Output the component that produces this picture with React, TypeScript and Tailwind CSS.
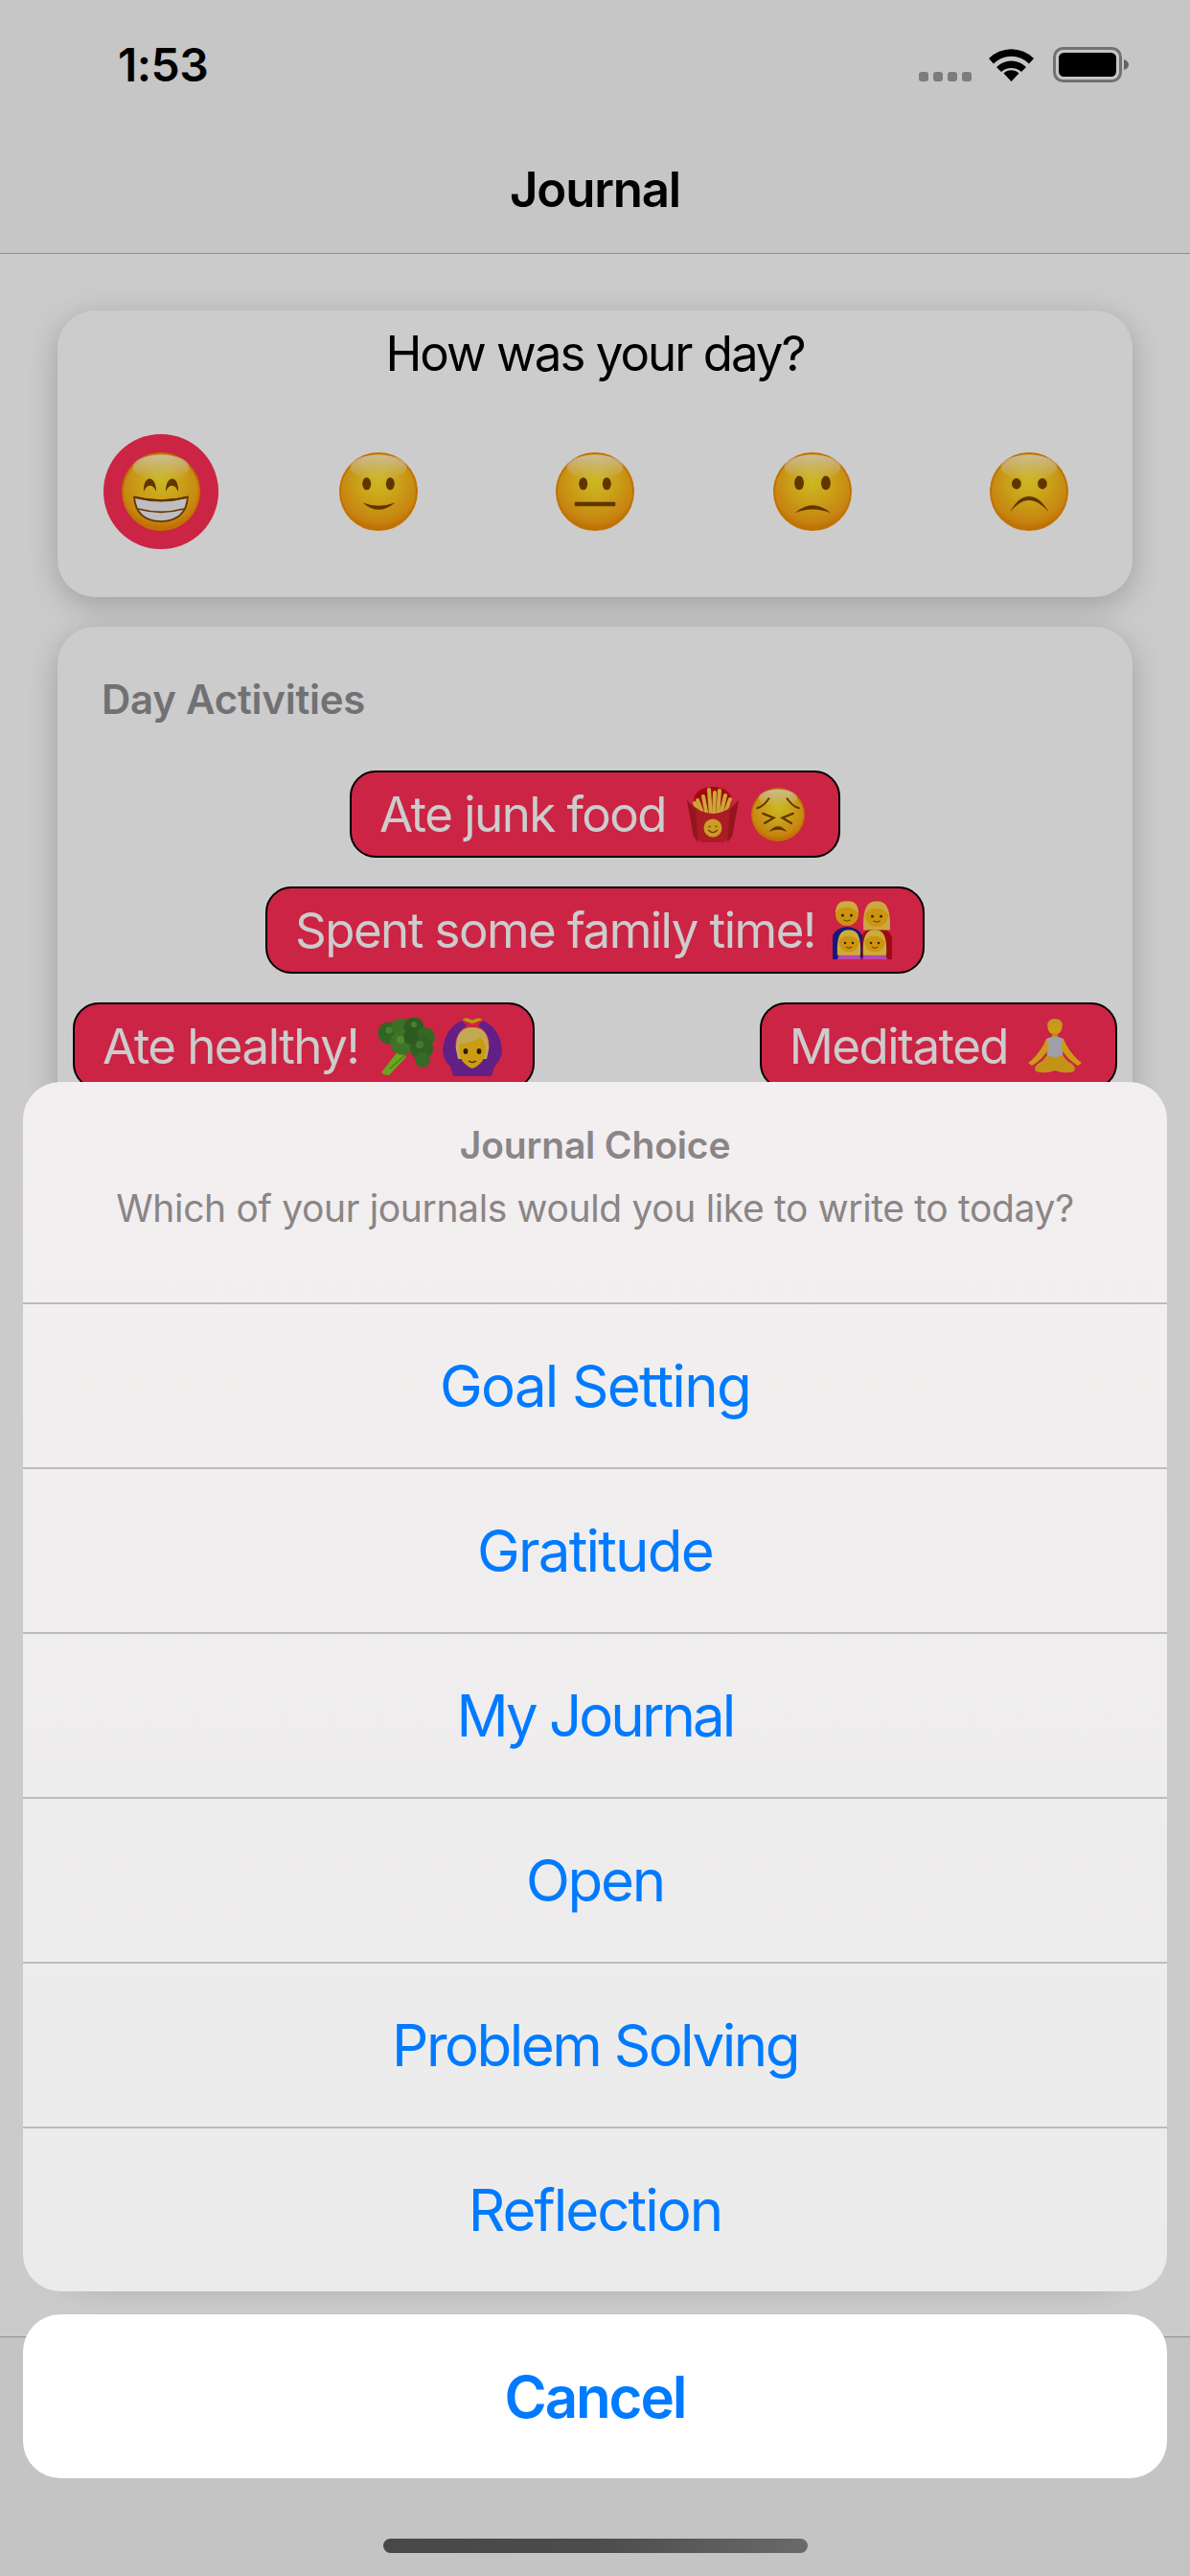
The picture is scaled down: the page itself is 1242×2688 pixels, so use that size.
import React from "react";

function FaceBase({ id }: { id: string }) {
  return (
    <>
      <defs>
        <radialGradient id={id} cx="50%" cy="36%" r="64%">
          <stop offset="0%" stopColor="#ffe82c" />
          <stop offset="45%" stopColor="#fdc81e" />
          <stop offset="85%" stopColor="#f9a516" />
          <stop offset="100%" stopColor="#ee8a00" />
        </radialGradient>
        <linearGradient id={id + "h"} x1="0" y1="0" x2="0" y2="1">
          <stop offset="0%" stopColor="#ffffff" stopOpacity="0.7" />
          <stop offset="100%" stopColor="#ffffff" stopOpacity="0" />
        </linearGradient>
      </defs>
      <circle cx="50" cy="50" r="50" fill="#f09000" />
      <circle cx="50" cy="50" r="47.5" fill={`url(#${id})`} />
      <ellipse cx="50" cy="19" rx="36" ry="16" fill={`url(#${id}h)`} />
    </>
  );
}

const BROWN = "#7a4300";

function Grin() {
  return (
    <svg viewBox="0 0 100 100" className="w-[82px] h-[82px]">
      <FaceBase id="f1" />
      <path d="M28 50 C27 28 44 28 44 50 C40 40 32 40 28 50Z" fill={BROWN} />
      <path d="M56 50 C56 28 73 28 72 50 C68 40 60 40 56 50Z" fill={BROWN} />
      <path d="M16 57 Q50 66 84 57 Q82 87 50 88 Q18 87 16 57Z" fill="#eeeef2" stroke={BROWN} strokeWidth="2.2" />
      <path d="M21 72 Q50 80 79 72" fill="none" stroke={BROWN} strokeWidth="2" />
      <path d="M16 57 Q50 66 84 57" fill="none" stroke={BROWN} strokeWidth="2.8" />
    </svg>
  );
}
function Smile() {
  return (
    <svg viewBox="0 0 100 100" className="w-[82px] h-[82px]">
      <FaceBase id="f2" />
      <ellipse cx="35" cy="40" rx="5.5" ry="8" fill={BROWN} />
      <ellipse cx="65" cy="40" rx="5.5" ry="8" fill={BROWN} />
      <path d="M30 64 Q50 72 71 64 Q50 82 30 64Z" fill={BROWN} />
    </svg>
  );
}
function Neutral() {
  return (
    <svg viewBox="0 0 100 100" className="w-[82px] h-[82px]">
      <FaceBase id="f3" />
      <ellipse cx="35" cy="40" rx="5.5" ry="8" fill={BROWN} />
      <ellipse cx="65" cy="40" rx="5.5" ry="8" fill={BROWN} />
      <rect x="24" y="63" width="52" height="5.5" rx="1.5" fill={BROWN} />
    </svg>
  );
}
function Slight() {
  return (
    <svg viewBox="0 0 100 100" className="w-[82px] h-[82px]">
      <FaceBase id="f4" />
      <ellipse cx="33" cy="39" rx="6" ry="9" fill={BROWN} />
      <ellipse cx="67" cy="39" rx="6" ry="9" fill={BROWN} />
      <path d="M28 77 Q50 58 73 77 Q50 68 28 77Z" fill={BROWN} />
    </svg>
  );
}
function Frown() {
  return (
    <svg viewBox="0 0 100 100" className="w-[82px] h-[82px]">
      <FaceBase id="f5" />
      <ellipse cx="34" cy="40" rx="6" ry="7" fill={BROWN} />
      <ellipse cx="67" cy="40" rx="6" ry="7" fill={BROWN} />
      <path d="M26 76 Q36 56 50 56 Q64 56 75 76 Q62 61 50 61 Q38 61 26 76Z" fill={BROWN} />
    </svg>
  );
}
function Fries() {
  return (
    <svg viewBox="0 0 54 58" className="w-[54px] h-[58px] ml-[22px]">
      <ellipse cx="27" cy="14" rx="20" ry="14" fill="#c81010" />
      <g stroke="#ffd045" strokeWidth="4" strokeLinecap="round">
        <path d="M11 14 L17 30" />
        <path d="M17 10 L21 31" />
        <path d="M23 3 L25 31" />
        <path d="M29 6 L28 31" />
        <path d="M34 4 L32 31" />
        <path d="M40 9 L35 30" />
        <path d="M45 13 L39 29" />
        <path d="M8 17 L13 28" />
      </g>
      <path d="M0 14 Q27 42 54 14 L47 52 L38 58 L16 58 L7 52Z" fill="#d8232e" />
      <path d="M0 14 L9 24 L12 58 L7 52Z" fill="#b81c26" />
      <path d="M54 14 L45 24 L42 58 L47 52Z" fill="#b81c26" />
      <circle cx="27" cy="43" r="9.5" fill="#ffc52e" />
      <path d="M22 42 q1.5 -2 3 0 M29 42 q1.5 -2 3 0" stroke="#8a5200" strokeWidth="1" fill="none" />
      <path d="M22 45 Q27 50 32 45" stroke="#8a5200" strokeWidth="1.2" fill="none" />
    </svg>
  );
}
function Persevere() {
  return (
    <svg viewBox="0 0 100 100" className="w-[56px] h-[56px] ml-[13px]">
      <FaceBase id="f6" />
      <g fill="none" stroke={BROWN} strokeLinecap="round">
        <path d="M11 38 Q24 34 33 20" strokeWidth="3.5" />
        <path d="M89 38 Q76 34 67 20" strokeWidth="3.5" />
        <path d="M22 48 L42 56 L25 66" strokeWidth="4" />
        <path d="M78 48 L58 56 L75 66" strokeWidth="4" />
      </g>
      <path d="M33 82 Q50 62 67 82 Q50 74 33 82Z" fill={BROWN} />
    </svg>
  );
}
function Head({ x, y, r, hair, long }: { x: number; y: number; r: number; hair: string; long?: boolean }) {
  return (
    <g>
      {long && <path d={`M${x - r * 1.15} ${y + r * 1.3} Q${x - r * 1.3} ${y - r * 1.3} ${x} ${y - r * 1.2} Q${x + r * 1.3} ${y - r * 1.3} ${x + r * 1.15} ${y + r * 1.3}Z`} fill={hair} />}
      <circle cx={x} cy={y} r={r} fill="#ffb914" />
      <path d={`M${x - r} ${y - r * 0.1} Q${x - r} ${y - r * 1.2} ${x} ${y - r * 1.15} Q${x + r} ${y - r * 1.2} ${x + r} ${y - r * 0.1} Q${x + r * 0.5} ${y - r * 0.65} ${x - r * 0.1} ${y - r * 0.6} Q${x - r * 0.7} ${y - r * 0.6} ${x - r} ${y - r * 0.1}Z`} fill={hair} />
      <circle cx={x - r * 0.38} cy={y + r * 0.1} r={r * 0.12} fill="#4a2a00" />
      <circle cx={x + r * 0.38} cy={y + r * 0.1} r={r * 0.12} fill="#4a2a00" />
      <path d={`M${x - r * 0.3} ${y + r * 0.5} Q${x} ${y + r * 0.7} ${x + r * 0.3} ${y + r * 0.5}`} stroke="#6a3a00" strokeWidth="0.9" fill="none" />
    </g>
  );
}
function Family() {
  return (
    <svg viewBox="0 0 62 61" className="w-[62px] h-[61px] ml-[18px]">
      <path d="M0 61 L0 36 Q4 28 15 27 Q27 28 31 36 L31 61Z" fill="#1c1c9c" />
      <path d="M31 61 L31 36 Q35 28 46 28 Q58 28 62 38 L62 61Z" fill="#c40f18" />
      <Head x={15} y={14} r={12} hair="#ffd84a" />
      <Head x={46} y={15} r={12} hair="#ffd050" long />
      <path d="M5 61 Q6 52 17 51 Q28 52 30 61Z" fill="#e85ad8" />
      <path d="M31 61 Q33 52 44 51 Q55 52 57 61Z" fill="#e85ad8" />
      <Head x={17} y={43} r={10.5} hair="#ffd84a" long />
      <Head x={44} y={43} r={10.5} hair="#ffd84a" long />
    </svg>
  );
}
function Broccoli() {
  return (
    <svg viewBox="0 0 60 60" className="w-[60px] h-[60px] ml-[20px]">
      <path d="M4 57 L22 34 L30 41 L12 60 Q7 60 4 57Z" fill="#86cf26" />
      <path d="M13 53 L30 38" stroke="#5ea515" strokeWidth="1.5" />
      <circle cx="12" cy="16" r="11.5" fill="#3f7f2c" />
      <circle cx="24" cy="10" r="9.5" fill="#4b8c30" />
      <circle cx="38" cy="10" r="10.5" fill="#37752a" />
      <circle cx="50" cy="20" r="10" fill="#42812c" />
      <circle cx="26" cy="26" r="12.5" fill="#4d9232" />
      <circle cx="46" cy="32" r="12" fill="#3c7a2a" />
      <circle cx="47" cy="44" r="8" fill="#448530" />
      <circle cx="35" cy="20" r="8" fill="#36722a" />
      <circle cx="24" cy="23" r="4" fill="#65ab42" />
      <circle cx="12" cy="13" r="3.5" fill="#5da13c" />
      <circle cx="44" cy="28" r="4" fill="#57983a" />
      <circle cx="38" cy="7" r="3" fill="#5da13c" />
    </svg>
  );
}
function WomanOk() {
  return (
    <svg viewBox="0 0 62 62" className="w-[62px] h-[62px] ml-[8px]">
      <path d="M31 7 L21 3 Q24 0 31 4 Q38 0 41 3Z" fill="#ffc21c" stroke="#e0a010" strokeWidth="1" />
      <path d="M0 35 Q2 12 20 4 L25 9 Q12 18 13 32 L17 44 L45 44 L49 32 Q50 18 37 9 L42 4 Q60 12 62 35 Q62 44 54 52 L51 62 L11 62 L8 52 Q0 44 0 35Z" fill="#7b28a8" />
      <path d="M14 34 Q13 11 31 11 Q49 11 48 34 L46 44 L16 44Z" fill="#f6d46a" />
      <path d="M17 34 Q17 48 31 54 Q45 48 45 34 Q45 26 39 21 Q30 28 18 28Z" fill="#ffc21c" />
      <ellipse cx="24" cy="36" rx="2.4" ry="3" fill="#3d2300" />
      <ellipse cx="38" cy="36" rx="2.4" ry="3" fill="#3d2300" />
      <path d="M27 46 Q31 49 35 46" stroke="#6a3a00" strokeWidth="1.5" fill="none" />
    </svg>
  );
}
function Meditate() {
  return (
    <svg viewBox="0 0 60 58" className="w-[60px] h-[58px] ml-[19px]">
      <circle cx="30" cy="9" r="7.5" fill="#ffc21c" />
      <path d="M22 8 Q22 0 30 0 Q38 0 38 8 Q30 3 22 8Z" fill="#f2bc30" />
      <rect x="27" y="15" width="6" height="5" fill="#f0b018" />
      <path d="M21 21 Q30 16 39 21 L38 42 L22 42Z" fill="#c7c9d1" />
      <path d="M21 21 Q17 32 6 43 L2 46 L6 49 Q18 42 24 30Z" fill="#ffc21c" />
      <path d="M39 21 Q43 32 54 43 L58 46 L54 49 Q42 42 36 30Z" fill="#ffc21c" />
      <path d="M22 38 Q30 42 38 38 L43 44 Q54 50 50 55 Q40 58 30 54 Q20 58 10 55 Q6 50 17 44Z" fill="#f4b81e" />
    </svg>
  );
}

function Pill({ label, children, pr }: { label: string; children: React.ReactNode; pr: string }) {
  return (
    <div className={`flex items-center h-[91px] rounded-[27px] border-2 border-black bg-[#ff2d55] pl-[29px] ${pr}`}>
      <span className="text-[51px] leading-[60px] text-white tracking-[-1.55px] whitespace-nowrap">{label}</span>
      {children}
    </div>
  );
}

const OPTIONS = [
  { label: "Goal Setting", cls: "tracking-[-1.7px]" },
  { label: "Gratitude", cls: "tracking-[-1.8px]" },
  { label: "My Journal", cls: "tracking-[-2.9px]" },
  { label: "Open", cls: "tracking-[-2.2px]" },
  { label: "Problem Solving", cls: "tracking-[-2.5px]" },
  { label: "Reflection", cls: "tracking-[-2px]" },
];

export default function App() {
  return (
    <div className="relative w-[1242px] h-[2688px] overflow-hidden flex flex-col bg-[#fefefe] font-['Inter','Liberation_Sans',sans-serif]">
      <header className="h-[265px] shrink-0 bg-[#f8f8f8] border-b border-[#b2b2b2]">
        <div className="h-[132px] flex justify-between pl-[123px] pr-[64px] pt-[49px]">
          <span className="text-[48px] leading-[37px] font-semibold text-black tracking-[-0.5px]">1:53</span>
          <div className="flex items-start">
            <div className="flex gap-[5px] mt-[26px] mr-[18px]">
              <div className="w-[10px] h-[10px] rounded-[3px] bg-[#9b9b9b]" />
              <div className="w-[10px] h-[10px] rounded-[3px] bg-[#9b9b9b]" />
              <div className="w-[10px] h-[10px] rounded-[3px] bg-[#9b9b9b]" />
              <div className="w-[10px] h-[10px] rounded-[3px] bg-[#9b9b9b]" />
            </div>
            <svg viewBox="0 0 47 36" className="w-[47px] h-[36px] mr-[20px]" fill="#000">
              <path d="M23.5 36 L15.5 27.5 A11.5 11.5 0 0 1 31.5 27.5 Z" />
              <path d="M8 21 A22 22 0 0 1 39 21 L34 26 A15.5 15.5 0 0 0 13 26 Z" />
              <path d="M0 12 A33 33 0 0 1 47 12 L42 17.5 A26 26 0 0 0 5 17.5 Z" />
            </svg>
            <svg viewBox="0 0 79 37" className="w-[79px] h-[37px]">
              <rect x="1.5" y="1.5" width="69" height="34" rx="9" fill="none" stroke="#8e8e8e" strokeWidth="3" />
              <rect x="6" y="6" width="60" height="25" rx="5.5" fill="#000" />
              <path d="M74 13 Q79 15 79 18.5 Q79 22 74 24Z" fill="#7e7e7e" />
            </svg>
          </div>
        </div>
        <div className="h-[132px] flex items-center justify-center">
          <span className="text-[51px] font-semibold text-black tracking-[-1.2px]">Journal</span>
        </div>
      </header>

      <main className="flex-1 flex flex-col gap-[31px] px-[60px] pt-[59px] pb-[63px]">
        <section className="h-[299px] shrink-0 rounded-[39px] bg-white shadow-[0_8px_32px_rgba(0,0,0,0.22)] pt-[14px]">
          <p className="text-center text-[51px] leading-[61px] text-black tracking-[-2px]">How was your day?</p>
          <div className="mt-[54px] px-[48px] flex justify-between">
            <div className="w-[120px] h-[120px] rounded-full bg-[#ff2d55] flex items-center justify-center"><Grin /></div>
            <div className="w-[120px] h-[120px] flex items-center justify-center"><Smile /></div>
            <div className="w-[120px] h-[120px] flex items-center justify-center"><Neutral /></div>
            <div className="w-[120px] h-[120px] flex items-center justify-center"><Slight /></div>
            <div className="w-[120px] h-[120px] flex items-center justify-center"><Frown /></div>
          </div>
        </section>

        <section className="flex-1 rounded-[39px] bg-white shadow-[0_8px_32px_rgba(0,0,0,0.22)] pt-[48px] px-[16px]">
          <h2 className="pl-[30px] text-[42px] leading-[56px] font-semibold text-[#8e8e93] tracking-[-0.25px]">Day Activities</h2>
          <div className="mt-[46px] flex flex-col gap-[30px]">
            <div className="flex justify-center">
              <Pill label="Ate junk food" pr="pr-[35px]"><Fries /><Persevere /></Pill>
            </div>
            <div className="flex justify-center">
              <Pill label="Spent some family time!" pr="pr-[32px]"><Family /></Pill>
            </div>
            <div className="flex justify-between">
              <Pill label="Ate healthy!" pr="pr-[32px]"><Broccoli /><WomanOk /></Pill>
              <Pill label="Meditated" pr="pr-[33px]"><Meditate /></Pill>
            </div>
          </div>
        </section>
      </main>

      <footer className="h-[250px] shrink-0 bg-[#f5f5f5] border-t border-[#b2b2b2]" />

      <div className="absolute inset-0 bg-black/20 flex flex-col justify-end items-stretch px-[24px] pb-[24px]">
        <div className="rounded-[39px] overflow-hidden bg-gradient-to-b from-[#f3eff0] to-[#ebebeb]">
          <div className="h-[230px] pt-[48px] text-center">
            <p className="text-[39px] leading-[36px] font-semibold text-[#8a8586] tracking-[-0.15px]">Journal Choice</p>
            <p className="mt-[30px] text-[39px] leading-[36px] text-[#8a8586] tracking-[-0.35px]">Which of your journals would you like to write to today?</p>
          </div>
          {OPTIONS.map((o) => (
            <div key={o.label} className={`h-[172px] flex items-center justify-center border-t-2 border-[#bcbcbc] text-[60px] text-[#007aff] ${o.cls}`}>
              {o.label}
            </div>
          ))}
        </div>
        <div className="mt-[24px] h-[171px] rounded-[39px] bg-white flex items-center justify-center text-[60px] font-semibold text-[#007aff] tracking-[-2.1px]">
          Cancel
        </div>
        <div className="mt-[63px] self-center w-[443px] h-[15px] rounded-full bg-gradient-to-r from-[#484848] via-[#4c4c4c] to-[#6a6a6a]" />
      </div>
    </div>
  );
}
